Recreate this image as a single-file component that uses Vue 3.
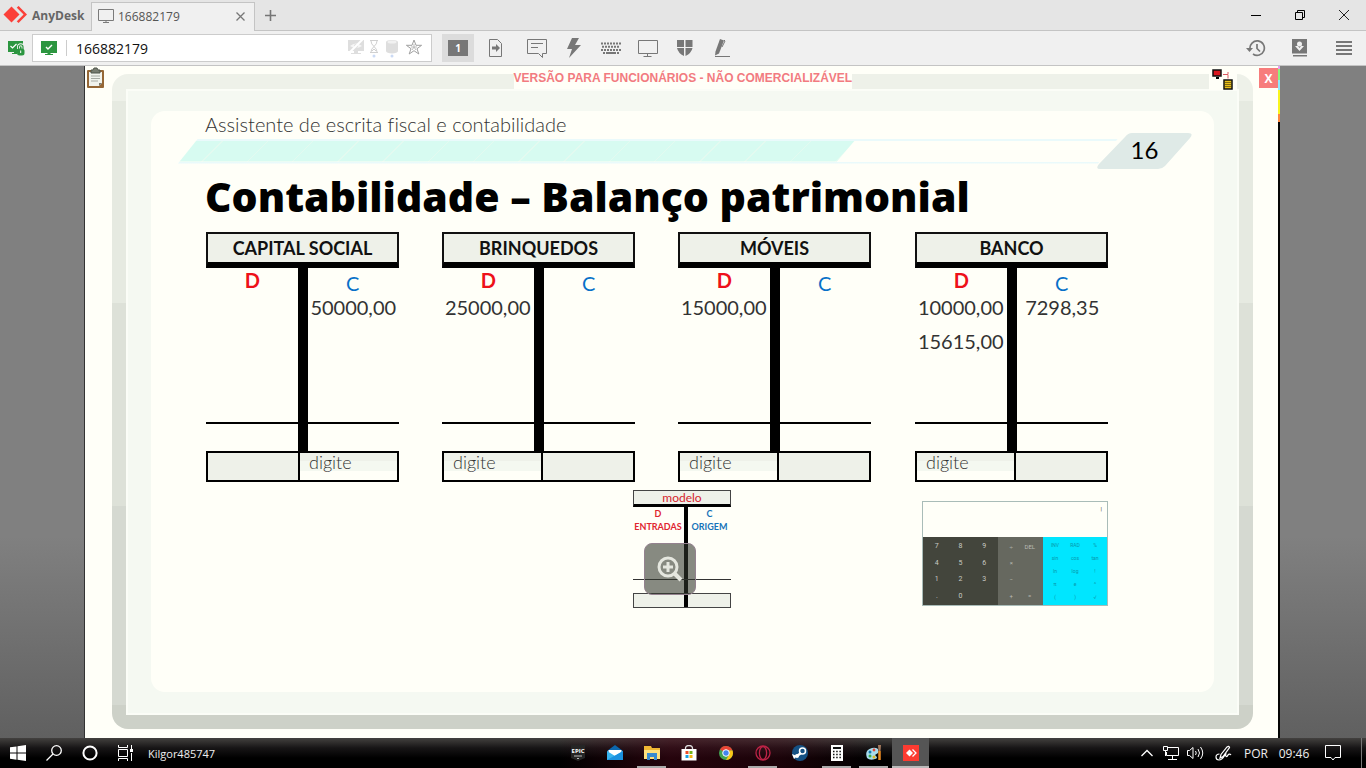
<script setup>
import { ref } from 'vue'

const address = ref('166882179')

const accounts = ref([
  { name: 'CAPITAL SOCIAL', side: 'c', answer: 'digite', rows: [['', '50000,00']] },
  { name: 'BRINQUEDOS', side: 'd', answer: 'digite', rows: [['25000,00', '']] },
  { name: 'MÓVEIS', side: 'd', answer: 'digite', rows: [['15000,00', '']] },
  { name: 'BANCO', side: 'd', answer: 'digite', rows: [['10000,00', '7298,35'], ['15615,00', '']] }
])

const digits = ['7', '8', '9', '4', '5', '6', '1', '2', '3', '.', '0', '']
const operators = ['÷', 'DEL', '×', '', '−', '', '+', '=']
const functions = ['INV', 'RAD', '%', 'sin', 'cos', 'tan', 'ln', 'log', '!', 'π', 'e', '^', '(', ')', '√']
</script>

<template>
  <div class="screen">
    <header class="titlebar">
      <div class="brand">
        <svg width="24" height="18" viewBox="0 0 24 18">
          <path d="M8.500 0.500 16.500 8.500 8.500 16.500 0.500 8.500z" fill="#fb4039" />
          <path d="M13.500 1 21 8.500 13.500 16" transform="translate(1 0)" fill="none" stroke="#fb4039" stroke-width="3" />
          <path d="M12 1 19.500 8.500 12 16" fill="none" stroke="#e5e5e5" stroke-width="1.500" />
        </svg>
        <span>AnyDesk</span>
      </div>
      <div class="tab">
        <svg width="18" height="16" viewBox="0 0 18 16" fill="none" stroke="#7a7a7a">
          <path d="M1.500 1.500h15v11h-15zM9 12.500v2M6 14.500h6" />
        </svg>
        <span>166882179</span>
        <button aria-label="Fechar aba">
          <svg width="9" height="9" viewBox="0 0 9 9"><path d="M.5.5l8 8M8.500.5l-8 8" stroke="#777" stroke-width="1.300" /></svg>
        </button>
      </div>
      <button class="newtab" aria-label="Nova aba">
        <svg width="11" height="11" viewBox="0 0 11 11"><path d="M5.500 0v11M0 5.500h11" stroke="#757575" stroke-width="1.600" /></svg>
      </button>
      <div class="window-controls">
        <button aria-label="Minimizar"><svg width="12" height="12"><path d="M1 6.500h10" stroke="#000" /></svg></button>
        <button aria-label="Restaurar"><svg width="12" height="12" fill="none" stroke="#000"><path d="M1.500 3.500h7v7h-7zM3.500 3V1.500h7v7H9" /></svg></button>
        <button aria-label="Fechar"><svg width="12" height="12"><path d="M1 1l10 10M11 1L1 11" stroke="#222" /></svg></button>
      </div>
    </header>

    <div class="toolbar">
      <svg class="secure" width="17" height="15" viewBox="0 0 17 15">
        <path d="M0 0h15v11H9v2H4v-1h2v-1H0z" fill="#2c9640" />
        <path d="M2.500 5l2 2 4-4" fill="none" stroke="#fff" stroke-width="1.200" />
        <path d="M10.500 8V6a2.250 2.250 0 0 1 4.500 0v2" fill="none" stroke="#f0f0f0" stroke-width="3" />
        <path d="M10.500 8V6a2.250 2.250 0 0 1 4.500 0v2" fill="none" stroke="#2c9640" stroke-width="1.200" />
        <rect x="9" y="7.500" width="7.500" height="7" rx="2.500" fill="#2c9640" />
        <path d="M12.700 9.500v2.500" stroke="#fff" />
      </svg>
      <div class="address">
        <svg width="16" height="15" viewBox="0 0 16 15">
          <path d="M0 0h16v12H9.500v1H12v1H4v-1h2.500v-1H0z" fill="#2c9640" />
          <path d="M5 6l2 2 4-4" fill="none" stroke="#fff" stroke-width="1.400" />
        </svg>
        <i></i>
        <input v-model="address" aria-label="Endereço remoto" />
        <svg class="status" width="76" height="20" viewBox="0 0 76 20">
          <g fill="#dedede">
            <path d="M1 2h16v11H11v2h3v1H4v-1h3v-2H1z" />
            <path d="M3 8q6-5 12 0-6 4-12 0z" fill="#f6f6f6" />
            <circle cx="9" cy="8" r="2" />
            <path d="M2 15 16 1" stroke="#fff" stroke-width="2" />
            <path d="M39 4a6 2 0 0 1 12 0v9a6 2.500 0 0 1-12 0z" />
          </g>
          <ellipse cx="45" cy="4" rx="4.500" ry="1.500" fill="#f1f1f1" />
          <path d="M23 2.500h8M23 14.500h8M24 3q0 3 3 5.500Q24 11 24 14M30 3q0 3-3 5.500 3 2.500 3 5.500M25 13l2-2 2 2" fill="none" stroke="#d0d0d0" />
          <circle cx="27" cy="18" r="1.500" fill="#cbdaf4" /><circle cx="45" cy="18" r="1.500" fill="#cbdaf4" />
          <path d="M67 2l2 5.300h5.600L70 10.700l1.800 5.300-4.800-3.300-4.800 3.300 1.800-5.300-4.600-3.400H65z" fill="none" stroke="#a0a0a0" />
          <path d="M67 6v3M67 9l3 0M67 9l-3 0M67 9l2 3M67 9l-2 3" stroke="#bbb" />
        </svg>
      </div>
      <button class="monitor-one" aria-label="Monitor 1"><b>1</b></button>
      <nav class="actions" aria-label="Ações da sessão">
        <button aria-label="Transferir arquivos"><svg width="16" height="20" fill="none" stroke="#777"><path d="M1.500 1.500h8l4 4v13h-12z" /><path d="M4 8.500h4V6l4 4-4 4v-2.500H4z" fill="#777" stroke="none" /></svg></button>
        <button aria-label="Bate-papo"><svg width="22" height="20" fill="none" stroke="#777"><path d="M1.500 1.500h19v14h-4v4l-4-4h-11zM5 5.500h12M5 9.500h7" /></svg></button>
        <button aria-label="Ações"><svg width="16" height="20"><path d="M6 0h7L9 7h6L3 20l3-9H1z" fill="#777" /></svg></button>
        <button aria-label="Teclado"><svg width="20" height="12" fill="none" stroke="#777"><path d="M0 1.500h20M0 8h20" stroke-width="2" stroke-dasharray="2 1" /><path d="M1 4.700h18" stroke-width="2" stroke-dasharray="2 1" /><path d="M2 11h2M5 11h10M16 11h2" stroke-width="2" /></svg></button>
        <button aria-label="Exibição"><svg width="22" height="20" fill="none" stroke="#777"><path d="M1.500 2.500h19v13h-19zM10.500 16v3M6.500 18.500h8" /></svg></button>
        <button aria-label="Permissões"><svg width="16" height="18" fill="#777"><path d="M0 1h7v7H0zM8.500 1h7v7h-7zM0 9h7v8Q1 14 0 9zM8.500 9h7q-1 5-7 8z" /></svg></button>
        <button aria-label="Quadro branco"><svg width="18" height="20"><path d="M7 1l4 1.500-5 13-4 2 .5-4z" fill="#777" /><path d="M11 2l1 1-3 6M2 18.500h15" fill="none" stroke="#777" /></svg></button>
      </nav>
      <nav class="tools" aria-label="Ferramentas">
        <button aria-label="Histórico"><svg width="20" height="18" fill="none" stroke="#777" stroke-width="1.700"><path d="M4 10A7.200 7.200 0 1 1 7 15" /><path d="M11 5v4.500l3 3" /><path d="M0 9h7l-3.500 4z" fill="#777" stroke="none" /></svg></button>
        <button aria-label="Downloads"><svg width="16" height="18"><path d="M0 0h15v14.500H0zM1 16h14v1.500H1z" fill="#777" /><circle cx="7.500" cy="5" r="2.500" fill="#f0f0f0" /><path d="M3 7h3l1.500 2L9 7h3l-4.500 5z" fill="#f0f0f0" /></svg></button>
        <button aria-label="Menu"><svg width="16" height="14"><path d="M0 1h16M0 5h16M0 9h16M0 13h16" stroke="#777" stroke-width="1.800" /></svg></button>
      </nav>
    </div>

    <main class="stage">
      <div class="remote">
        <svg class="clipboard" width="19" height="22" viewBox="0 0 19 22">
          <rect x="1" y="3" width="17" height="18" rx="1" fill="#956736" />
          <path d="M3 5h13v11l-3 3H3z" fill="#f1f3ed" /><path d="M13 19v-3h3z" fill="#7b7b70" />
          <path d="M5 9h9M5 11.500h9M5 14h7" stroke="#a6aaa3" />
          <path d="M5 3h2l1-2h3l1 2h2v3H5z" fill="#777c70" stroke="#4f554b" />
        </svg>
        <p class="banner">VERSÃO PARA FUNCIONÁRIOS - NÃO COMERCIALIZÁVEL</p>
        <svg class="link-state" width="28" height="23" viewBox="0 0 28 23">
          <rect width="28" height="23" fill="#fffff8" />
          <path d="M4 3h8v6H4z" fill="#da1720" stroke="#111" stroke-width="1.500" /><path d="M7 10h3v2H7z" />
          <path d="M14 7.500h5v4M19 5v2" fill="none" stroke="#da5960" />
          <path d="M15 13h8v9h-8z" fill="#eac019" stroke="#111" stroke-width="1.500" />
          <path d="M16 15.500h6M16 17.500h6M16 19.500h6" stroke="#806a14" />
        </svg>
        <button class="quit">X</button>

        <div class="frame">
          <div class="mat">
            <section class="slide">
              <p class="course">Assistente de escrita fiscal e contabilidade</p>
              <div class="progress">
                <div class="track"><div class="fill"></div></div>
                <div class="page"><svg width="95" height="38" viewBox="0 0 95 38"><path d="M35 1h56q6 0 2 5L68 34q-3 3-7 3H3q-5 0-1-5L28 5q3-4 7-4z" fill="#dfeae7" /></svg><span>16</span></div>
              </div>
              <h1>Contabilidade – Balanço patrimonial</h1>

              <div class="accounts">
                <section v-for="a in accounts" :key="a.name" class="account">
                  <h2>{{ a.name }}</h2>
                  <div class="ledger">
                    <table>
                      <thead><tr><th class="debit">D</th><th class="credit">C</th></tr></thead>
                      <tbody>
                        <tr v-for="(r, i) in a.rows" :key="i"><td>{{ r[0] }}</td><td>{{ r[1] }}</td></tr>
                      </tbody>
                    </table>
                    <div class="rule"></div>
                  </div>
                  <div class="total" :class="a.side">
                    <span></span>
                    <input v-model="a.answer" :aria-label="'Saldo de ' + a.name" />
                  </div>
                </section>
              </div>

              <div class="helpers">
                <section class="model">
                  <h3>modelo</h3>
                  <div class="model-body">
                    <p class="in">D<br />ENTRADAS</p>
                    <p class="out">C<br />ORIGEM</p>
                    <div class="model-rule"></div>
                  </div>
                  <div class="model-total"></div>
                  <button class="magnify" aria-label="Ampliar modelo">
                    <svg width="28" height="28" viewBox="0 0 28 28" fill="none" stroke="#e5e7df">
                      <circle cx="12" cy="12" r="9" stroke-width="3" />
                      <path d="M12 7v10M7 12h10" stroke-width="3" /><path d="M18 18l7 7" stroke-width="4" />
                    </svg>
                  </button>
                </section>
                <section class="calculator" aria-label="Calculadora">
                  <output>|</output>
                  <div class="keys">
                    <div class="digits"><template v-for="(k, i) in digits" :key="i"><button v-if="k">{{ k }}</button><span v-else></span></template></div>
                    <div class="operators"><template v-for="(k, i) in operators" :key="i"><button v-if="k">{{ k }}</button><span v-else></span></template></div>
                    <div class="functions"><button v-for="k in functions" :key="k">{{ k }}</button></div>
                  </div>
                </section>
              </div>
            </section>
          </div>
        </div>
      </div>
      <div class="edge"></div>
    </main>

    <footer class="taskbar">
      <div class="start">
        <button aria-label="Iniciar"><svg width="16" height="16" fill="#fff"><path d="M0 2.300 6.500 1.400v6.200H0zM7.500 1.200 16 0v7.600H7.500zM0 8.500h6.500v6.200L0 13.800zM7.500 8.500H16V16l-8.500-1.200z" /></svg></button>
        <button aria-label="Pesquisar"><svg width="16" height="16" fill="none" stroke="#fff" stroke-width="1.300"><circle cx="10.500" cy="5.500" r="4.800" /><path d="M7 9l-6.500 6.500" /></svg></button>
        <button aria-label="Cortana"><svg width="16" height="16"><circle cx="8" cy="8" r="6.600" fill="none" stroke="#fff" stroke-width="2" /></svg></button>
        <button aria-label="Visão de tarefas"><svg width="18" height="16" fill="none" stroke="#fff"><path d="M1.500 0v2.500h9V0M1.500 4.500h9v7h-9zM1.500 16v-2.500h9V16M14.500 0v4M14.500 8v8" /><path d="M13 4h3v3h-3z" fill="#fff" stroke="none" /></svg></button>
        <span>Kilgor485747</span>
      </div>
      <div class="apps">
        <button aria-label="Epic Games"><svg width="14" height="16"><path d="M0 0h14v13l-7 3-7-3z" fill="#252525" /><text x="7" y="8" text-anchor="middle" class="epic">EPIC</text><path d="M3 11h8M6 13.500h2" stroke="#bbb" /></svg></button>
        <button aria-label="Email"><svg width="16" height="16"><path d="M0 6 8 0l8 6v9H0z" fill="#0c67ad" /><path d="M1.500 5h13v8h-13z" fill="#fff" /><path d="M0 6l8 5 8-5v9H0z" fill="#37b3ee" /><path d="M0 15 16 6v9z" fill="#1a91df" /></svg></button>
        <button class="open" aria-label="Explorador de arquivos"><svg width="16" height="14"><path d="M0 0h7l1 2h8v11H0z" fill="#f0b834" /><path d="M0 4h16v9H0z" fill="#ffe17d" /><path d="M3 7h10v7h-3v-3H6v3H3z" fill="#398bd0" /></svg></button>
        <button aria-label="Loja"><svg width="16" height="16"><path d="M4.500 5V3.500a3.500 3 0 0 1 7 0V5" fill="none" stroke="#ddd" stroke-width="1.300" /><path d="M.5 4h15v11.500H.5z" fill="#fff" /><path d="M4.500 6h3v3h-3z" fill="#ec4d27" /><path d="M8.500 6h3v3h-3z" fill="#75b51b" /><path d="M4.500 10h3v3h-3z" fill="#16a0e4" /><path d="M8.500 10h3v3h-3z" fill="#f5b614" /></svg></button>
        <button aria-label="Chrome"><svg width="16" height="16"><circle cx="8" cy="8" r="7" fill="#43a452" /><path d="M8 8 2 4.400A7 7 0 0 1 14.500 5.500H8z" fill="#e84435" /><path d="M8 5.500h6.500A7 7 0 0 1 8 15l3.500-6z" fill="#fbc618" /><circle cx="8" cy="8" r="3.300" fill="#4284ee" stroke="#fff" /></svg></button>
        <button class="open" aria-label="Opera"><svg width="16" height="16" fill="none" stroke="#bc2346"><circle cx="8" cy="8" r="7" stroke-width="1.300" /><ellipse cx="8" cy="8" rx="3.600" ry="6.500" stroke-width="1.300" /></svg></button>
        <button aria-label="Steam"><svg width="16" height="16"><circle cx="8" cy="8" r="8" fill="#155184" /><path d="M0 9l5 2-3 3z" fill="#fff" /><circle cx="10.500" cy="6" r="3" fill="none" stroke="#fff" stroke-width="1.500" /><path d="M9 8l-4 3" stroke="#fff" stroke-width="2.500" /><circle cx="5" cy="11" r="2" fill="#fff" /></svg></button>
        <button class="open" aria-label="Calculadora"><svg width="12" height="16"><path d="M0 0h12v16H0z" fill="#fff" /><path d="M2 2h8v2H2z" fill="#111" /><path d="M2 6.500h8M2 9.500h8M2 12.500h8" stroke="#111" stroke-width="1.500" stroke-dasharray="1.500 1.700" /></svg></button>
        <button class="open" aria-label="Paint"><svg width="16" height="16"><path d="M1 13Q-2 5 6 3q8-1 6 5l-3 2q4 3 0 4-5 2-8-1z" fill="#a8dced" /><circle cx="4" cy="7" r="1.500" fill="#1579ae" /><circle cx="8" cy="5" r="1.400" fill="#e04734" /><circle cx="4" cy="11" r="1.500" fill="#39ad4d" /><circle cx="8" cy="12" r="1.500" fill="#dfb721" /><path d="M13.500 6v9" stroke="#ec8d23" stroke-width="2.500" /><path d="M12 0h3l-.5 6h-2z" fill="#a57a5d" /></svg></button>
        <button class="active" aria-label="AnyDesk"><svg width="16" height="16"><path d="M0 0h16v16H0z" fill="#fc3b31" /><path d="M6.500 4.500 10 8l-3.500 3.500L3 8z" fill="#fff" /><path d="M9.500 4.500 13 8l-3.500 3.500" fill="none" stroke="#fff" stroke-width="1.300" /></svg></button>
      </div>
      <div class="tray">
        <button aria-label="Mostrar ícones ocultos"><svg width="12" height="8"><path d="M.5 7 6 1.500 11.500 7" fill="none" stroke="#fff" stroke-width="1.300" /></svg></button>
        <button aria-label="Rede"><svg width="16" height="14" fill="none" stroke="#fff"><path d="M5 1.500h10.500v8H3.500V6M.5.5h4v4h-4zM2.500 5v5M9.500 10v3M5 13.500h9" /></svg></button>
        <button aria-label="Volume"><svg width="17" height="14" fill="none" stroke="#fff"><path d="M.5 4.500h2l3.500-3v11l-3.500-3h-2zM8.500 5q1.500 2 0 4M11 3q3 4 0 8M13.500 1q4.500 6 0 12" /></svg></button>
        <button class="pen" aria-label="Windows Ink"><svg width="17" height="16" fill="none" stroke="#fff" stroke-width="1.200"><path d="M5 13 6 9.500 12 2q2-1.500 2.500.5L8 11.500zM4.500 9Q1 9 1 12t3 3q3 0 6-5M11 8q-1 4 1 3.500 2-4 4-1.500" /></svg></button>
        <span class="lang">POR</span>
        <time>09:46</time>
        <button class="notice" aria-label="Notificações"><svg width="18" height="16"><path d="M1.500.5h15v12H11l-2 2.500-2-2.500H1.500z" fill="none" stroke="#fff" /></svg></button>
        <i></i>
      </div>
    </footer>
  </div>
</template>

<style>
body { margin: 0; }
</style>

<style scoped>
* { box-sizing: border-box; }
h1, h2, h3, p { margin: 0; }
button, input { margin: 0; padding: 0; border: 0; background: none; font: inherit; color: inherit; outline: 0; min-width: 0; }
button { display: flex; align-items: center; justify-content: center; }
svg { display: block; flex: none; }

.screen { min-height: 100vh; display: flex; flex-direction: column; font-family: "Open Sans", "Noto Sans", sans-serif; font-size: 12px; color: #555; background: #808080; }

.titlebar { height: 31px; display: flex; align-items: stretch; background: #e5e5e5; border-bottom: 1px solid #c4c4c4; }
.brand { width: 91px; display: flex; align-items: center; gap: 5px; padding-left: 3px; font-weight: 700; color: #666; }
.tab { width: 164px; margin: 2px 0 -1px; padding: 0 9px 2px 5px; display: flex; align-items: center; gap: 3px; background: #f0f0f0; border: 1px solid #c4c4c4; border-bottom: 0; }
.tab button { margin-left: auto; }
.newtab { width: 31px; }
.window-controls { margin-left: auto; display: flex; }
.window-controls button { width: 44px; }

.toolbar { height: 35px; display: flex; align-items: center; background: #f0f0f0; border-bottom: 1px solid #c4c4c4; }
.secure { margin: 0 7px 0 8px; }
.address { width: 400px; height: 28px; display: flex; align-items: center; gap: 9px; padding: 0 8px; border: 1px solid #ccc; background: #fff; color: #111; font-size: 14px; }
.address i { width: 1px; height: 16px; background: #ccc; }
.address input { flex: 1; }
.monitor-one { width: 32px; height: 28px; margin-left: 10px; background: #dcdcdc; }
.monitor-one b { width: 20px; height: 16px; background: #777; color: #fff; font-size: 10px; line-height: 16px; }
.actions { display: flex; }
.actions button { width: 37px; height: 28px; }
.actions button:first-child { width: 44px; }
.tools { margin-left: auto; display: flex; }
.tools button { width: 44px; }

.stage { flex: 1; display: flex; padding: 0 86px 0 84px; background: linear-gradient(#808080 70%, #606060); }
.remote { position: relative; flex: 1; display: flex; padding: 8px 25px 9px 27px; border-left: 1px solid #333; background: #fffff8; }
.edge { width: 2px; background: linear-gradient(#e59bf0 0 3px, #8cf57a 3px 14px, #8ee9ff 14px 24px, #f9f51d 24px 48px, #ff873d 48px 56px, #050505 56px); }
.clipboard { position: absolute; left: 1px; top: 1px; }
.banner { position: absolute; left: 50%; top: 0; height: 23px; margin-left: -168px; background: #fffff8; color: #f27b80; font: bold 12px/25px "Liberation Sans", sans-serif; white-space: nowrap; z-index: 1; }
.link-state { position: absolute; right: 41px; top: 1px; z-index: 1; }
.quit { position: absolute; right: 0; top: 2px; width: 19px; height: 20px; background: #f77c7c; color: #fff; font-weight: 700; }

.frame { flex: 1; display: flex; padding: 15px 14px 14px; border-radius: 16px; background: linear-gradient(#eef1e9 0 27px, #e6eae1 27px 35%, #dde1d8 35% 66%, #d5d9d1 66% 631px, #cdd1c8 631px); }
.mat { flex: 1; display: flex; padding: 20px 23px 21px; background: #f5f9f2; border: 2px solid #fbfdf7; }
.slide { flex: 1; border-radius: 14px; background: #fffff8; padding: 0 22px 0 27px; }

.course { padding-left: 27px; height: 21px; font: 300 20px/26px Lato, sans-serif; font-variant-ligatures: none; color: #333; white-space: nowrap; }
.progress { display: flex; height: 38px; align-items: center; }
.track { flex: 1; height: 25px; margin-right: -21px; padding: 2px 0; display: flex; background: linear-gradient(#eafafb 0 2px, #fffff8 2px 23px, #eafafb 23px); clip-path: polygon(20px 0, 100% 0, calc(100% - 20px) 100%, 0 100%); }
.fill { width: 72%; background: repeating-linear-gradient(135deg, #d7fbf1 0 31px, #e3faf0 31px 32px); clip-path: polygon(0 0, 100% 0, calc(100% - 18px) 100%, 0 100%); }
.page { position: relative; width: 95px; }
.page span { position: absolute; inset: 0; text-align: center; font: 24px/36px Lato, sans-serif; color: #000; }
h1 { padding-left: 27px; height: 62px; font: 800 41px/52px "Open Sans", sans-serif; color: #000; white-space: nowrap; }

.accounts { display: flex; gap: 43px; padding: 0 84px 0 28px; font-family: Lato, sans-serif; color: #333; }
.account { width: 193px; }
.account:last-child { margin-left: auto; }
.account h2 { height: 36px; border: 2px solid #111; border-bottom: 6px solid #000; background: #eef1e9; color: #111; text-align: center; font-size: 18px; line-height: 28px; font-weight: 700; }
.ledger { height: 183px; display: flex; flex-direction: column; background: linear-gradient(#000, #000) center / 10px 100% no-repeat; }
table { width: 100%; table-layout: fixed; border-collapse: collapse; text-align: center; font-size: 20px; line-height: 24px; }
th { padding: 0 4px 0 0; vertical-align: top; }
td { height: 34px; padding: 0 5px 0 0; vertical-align: top; }
td + td { padding: 0 0 0 5px; }
.debit { color: #ee1119; }
.credit { color: #0871c8; font-weight: 400; padding: 3px 0 0 4px; }
.rule { margin: auto 0 27px; height: 2px; background: #000; }
.total { display: flex; height: 31px; border: 2px solid #000; background: #eef1e9; }
.total span { flex: 1; }
.total input { width: 99px; height: 27px; padding: 0 0 9px 9px; font: 300 18px/18px Lato, sans-serif; color: #333; background: linear-gradient(#eef1e9 0 8px, #f4f8f0 8px 18px, #fffff8 18px); }
.total.c input { border-left: 2px solid #000; }
.total.d { flex-direction: row-reverse; }
.total.d input { border-right: 2px solid #000; }

.helpers { display: flex; justify-content: space-between; padding: 8px 84px 0 455px; align-items: flex-start; }
.model { position: relative; width: 98px; font-family: Lato, sans-serif; }
.model h3 { height: 17px; border: 1px solid #444; border-bottom: 3px solid #000; background: #eef1e9; color: #d51f2d; font-size: 12px; line-height: 14px; text-align: center; font-weight: 400; }
.model-body { height: 86px; display: flex; flex-wrap: wrap; align-content: flex-start; text-align: center; font-size: 9px; line-height: 13px; font-weight: 700; background: linear-gradient(#000, #000) 51px 0 / 4px 100% no-repeat; }
.model-body p { width: 50px; height: 26px; }
.in { color: #df2630; }
.model-body .out { width: 48px; color: #1673b9; padding-left: 5px; }
.model-rule { width: 100%; height: 1px; margin-top: 46px; background: #333; }
.model-total { height: 15px; border: 1px solid #444; background: linear-gradient(#000, #000) 50px 0 / 4px 100% no-repeat #eef1e9; }
.magnify { position: absolute; left: 11px; top: 53px; width: 52px; height: 52px; border-radius: 8px; background: rgba(48, 54, 43, .58); border: 1px solid #94828f; }

.calculator { width: 186px; margin-top: 11px; border: 1px solid #a9bcb8; font-family: Roboto, sans-serif; }
output { display: block; height: 35px; padding: 3px 5px; text-align: right; font-size: 6px; line-height: 8px; color: #444; }
.keys { display: flex; height: 68px; }
.keys > div { display: grid; }
.digits { width: 75px; grid-template-columns: repeat(3, 1fr); padding: 1px 2px; background: #43453c; color: #c9cac5; font-size: 7px; }
.operators { width: 45px; grid-template-columns: repeat(2, 1fr); padding: 1px 4px; background: #66685f; color: #b8bab3; font-size: 6px; }
.functions { flex: 1; grid-template-columns: repeat(3, 1fr); padding: 1px 2px; background: #00e6ff; color: #0898ab; font-size: 5px; }

.taskbar { height: 30px; display: flex; background: linear-gradient(#43413f, #171516 10px, #000 20px); color: #eee; }
.start { width: 559px; display: flex; align-items: center; }
.start button { width: 36px; height: 30px; }
.start span { margin-left: 4px; font-size: 11px; }
.apps { display: flex; background: linear-gradient(90deg, transparent, rgba(75, 8, 25, .5) 30%, rgba(75, 8, 25, .35) 60%, transparent 85%); }
.apps button { width: 37px; height: 30px; position: relative; }
.apps .open::after { content: ""; position: absolute; left: 4px; right: 4px; bottom: 0; height: 2px; background: #aaa; }
.apps .active { background: #555; border-bottom: 2px solid #bbb; padding-top: 2px; }
.epic { font: bold 6px "Open Sans", sans-serif; fill: #fff; }
.tray { margin-left: auto; display: flex; align-items: center; }
.tray button { width: 24px; }
.tray .pen { width: 32px; }
.lang { width: 39px; padding-left: 5px; }
.tray time { width: 32px; text-align: center; }
.notice.notice { width: 46px; }
.tray i { width: 1px; height: 30px; margin: 0 4px 0 5px; background: #777; }
</style>
